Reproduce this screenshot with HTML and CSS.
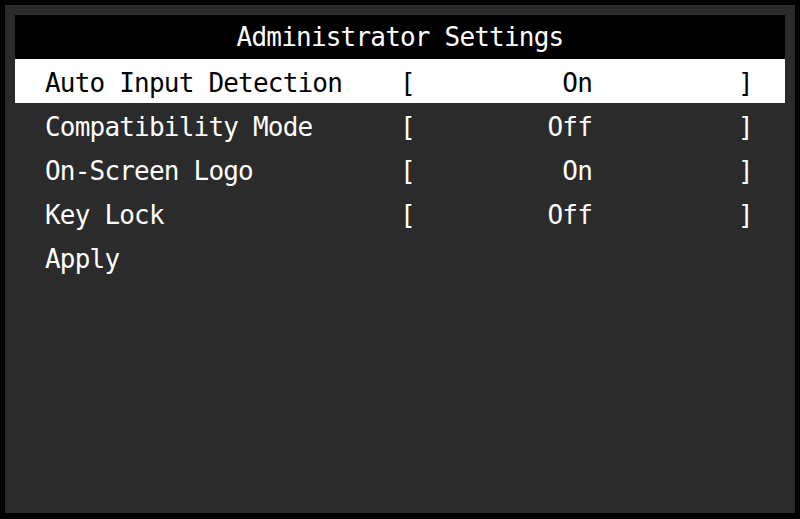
FILE: index.html
```html
<!DOCTYPE html>
<html>
<head>
<meta charset="utf-8">
<link rel="stylesheet" href="styles.css">
</head>
<body>
<div class="screen">
  <div class="title">Administrator Settings</div>
  <div class="menu">
    <div class="row selected">
      <span class="label">Auto Input Detection</span>
      <span class="br">[</span><span class="val">On</span><span class="br end">]</span>
    </div>
    <div class="row">
      <span class="label">Compatibility Mode</span>
      <span class="br">[</span><span class="val">Off</span><span class="br end">]</span>
    </div>
    <div class="row">
      <span class="label">On-Screen Logo</span>
      <span class="br">[</span><span class="val">On</span><span class="br end">]</span>
    </div>
    <div class="row">
      <span class="label">Key Lock</span>
      <span class="br">[</span><span class="val">Off</span><span class="br end">]</span>
    </div>
    <div class="row">
      <span class="label">Apply</span>
    </div>
  </div>
</div>
</body>
</html>
```

FILE: styles.css
```css
html, body {
  margin: 0;
  padding: 0;
  background: #000;
}
body {
  width: 800px;
  height: 519px;
  overflow: hidden;
}
.screen {
  box-sizing: border-box;
  margin: 5px 5px 0 5px;
  width: 790px;
  height: 508px;
  padding: 10px;
  background: #2b2b2b;
  font-family: "DejaVu Sans Mono", monospace;
  font-size: 26px;
  letter-spacing: -0.8px;
  color: #fff;
}
.title {
  height: 44px;
  line-height: 44px;
  background: #000;
  text-align: center;
}
.menu {
  display: flex;
  flex-direction: column;
}
.row {
  box-sizing: border-box;
  display: flex;
  align-items: center;
  height: 44px;
  padding-left: 30px;
  padding-top: 3px;
  white-space: pre;
}
.row.selected {
  background: #fff;
  color: #000;
}
.label {
  width: 355px;
}
.br {
  width: 15px;
}
.br.end {
  margin-left: 146px;
}
.val {
  width: 177px;
  text-align: right;
}
```
